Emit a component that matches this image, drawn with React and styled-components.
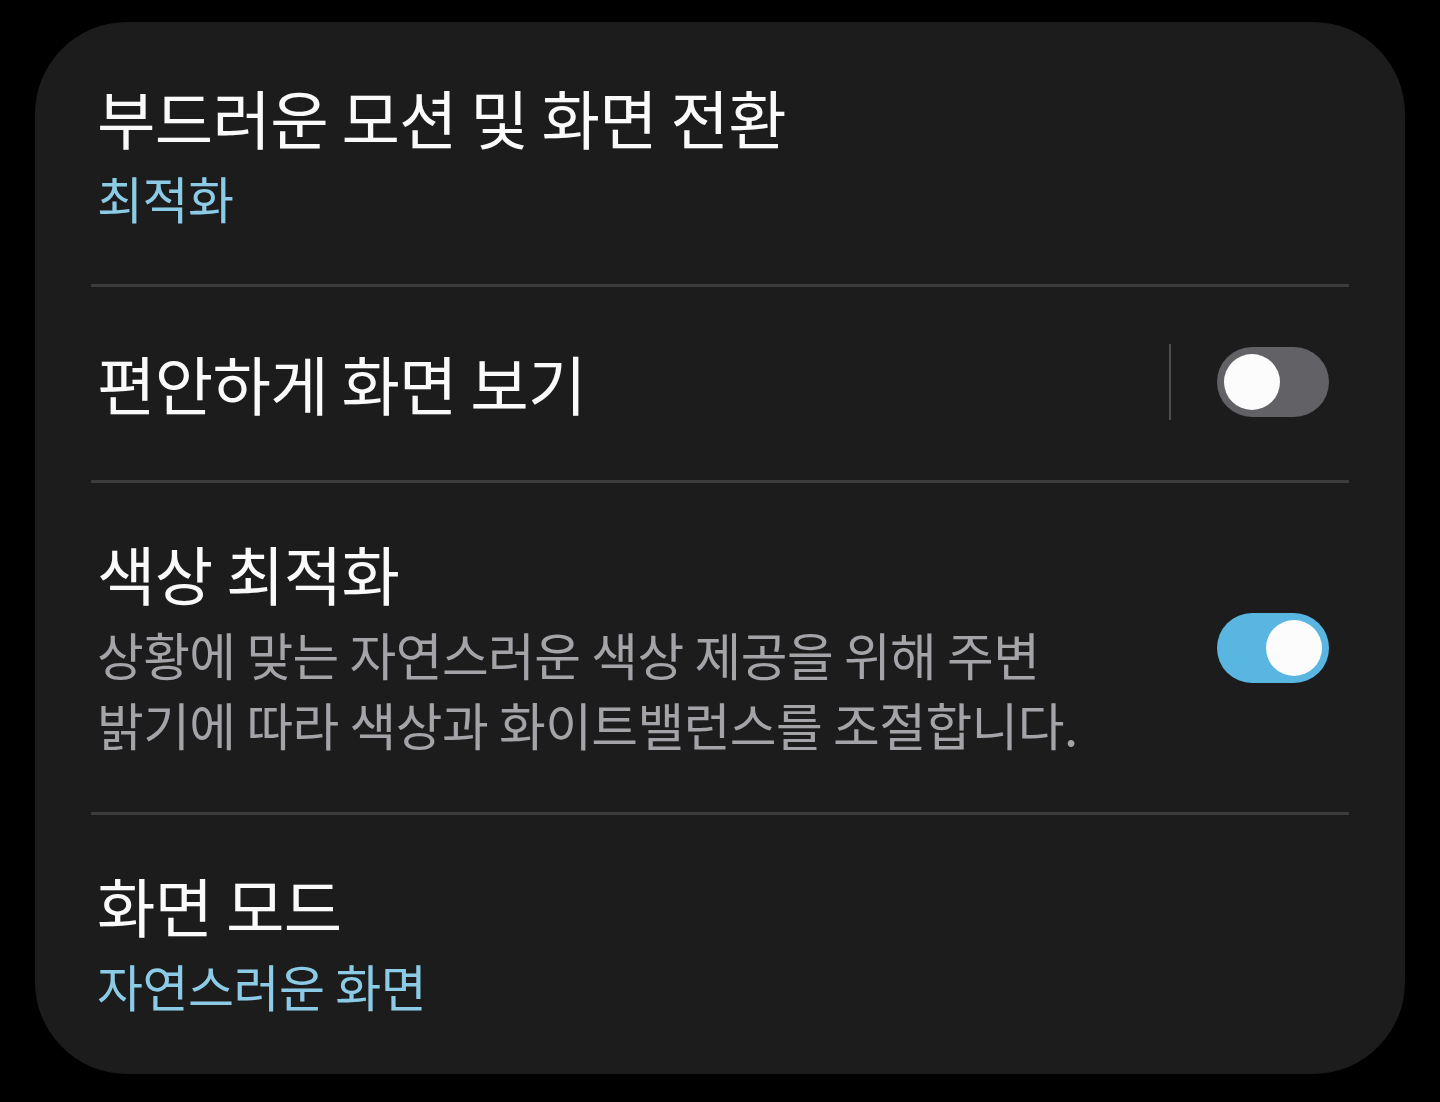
import React from 'react'
import styled, { createGlobalStyle } from 'styled-components'

const GlobalStyle = createGlobalStyle`
  html, body {
    margin: 0;
    padding: 0;
    background: #000;
  }
  body {
    font-family: "Noto Sans CJK KR", "Noto Sans", sans-serif;
  }
`

const Page = styled.div`
  width: 1440px;
  height: 1102px;
  padding: 22px 35px 28px 35px;
  box-sizing: border-box;
  background: #000;
`

const Card = styled.div`
  height: 100%;
  background: #1c1c1c;
  border-radius: 92px;
  padding: 0 56px;
  box-sizing: border-box;
  display: flex;
  flex-direction: column;
`

const Row = styled.div`
  display: flex;
  align-items: center;
  height: ${p => p.h}px;
  padding: 0 20px ${p => p.pb || 0}px 6px;
  box-sizing: border-box;
  border-bottom: ${p => (p.last ? 'none' : '3px solid #3c3c3c')};
`

const TextCol = styled.div`
  flex: 1;
  display: flex;
  flex-direction: column;
  gap: ${p => p.gap || 0}px;
`

const Title = styled.div`
  color: #fafafa;
  font-size: 63.5px;
  line-height: 72px;
  letter-spacing: -0.7px;
`

const Sub = styled.div`
  color: #8ccbe6;
  font-size: 50px;
  line-height: 60px;
  letter-spacing: -0.5px;
`

const Desc = styled.div`
  color: #a3a3a8;
  font-size: 50.8px;
  line-height: 70px;
  letter-spacing: -0.55px;
  white-space: pre-line;
`

const VLine = styled.div`
  width: 2px;
  height: 76px;
  background: #4e4e4e;
  margin-right: 46px;
`

const Switch = styled.div`
  width: 112px;
  height: 70px;
  border-radius: 35px;
  background: ${p => (p.on ? '#59b6e1' : '#626266')};
  display: flex;
  align-items: center;
  justify-content: ${p => (p.on ? 'flex-end' : 'flex-start')};
  padding: 0 7px;
  box-sizing: border-box;
  flex-shrink: 0;
`

const Knob = styled.div`
  width: 56px;
  height: 56px;
  border-radius: 50%;
  background: #fcfcfc;
`

export default function App() {
  return (
    <>
      <GlobalStyle />
      <Page>
        <Card>
          <Row h={265}>
            <TextCol gap={15}>
              <Title>부드러운 모션 및 화면 전환</Title>
              <Sub>최적화</Sub>
            </TextCol>
          </Row>
          <Row h={196} pb={3}>
            <TextCol>
              <Title>편안하게 화면 보기</Title>
            </TextCol>
            <VLine />
            <Switch>
              <Knob />
            </Switch>
          </Row>
          <Row h={332}>
            <TextCol gap={11}>
              <Title>색상 최적화</Title>
              <Desc>{'상황에 맞는 자연스러운 색상 제공을 위해 주변\n밝기에 따라 색상과 화이트밸런스를 조절합니다.'}</Desc>
            </TextCol>
            <Switch on>
              <Knob />
            </Switch>
          </Row>
          <Row h={259} pb={6} last>
            <TextCol gap={15}>
              <Title>화면 모드</Title>
              <Sub>자연스러운 화면</Sub>
            </TextCol>
          </Row>
        </Card>
      </Page>
    </>
  )
}
